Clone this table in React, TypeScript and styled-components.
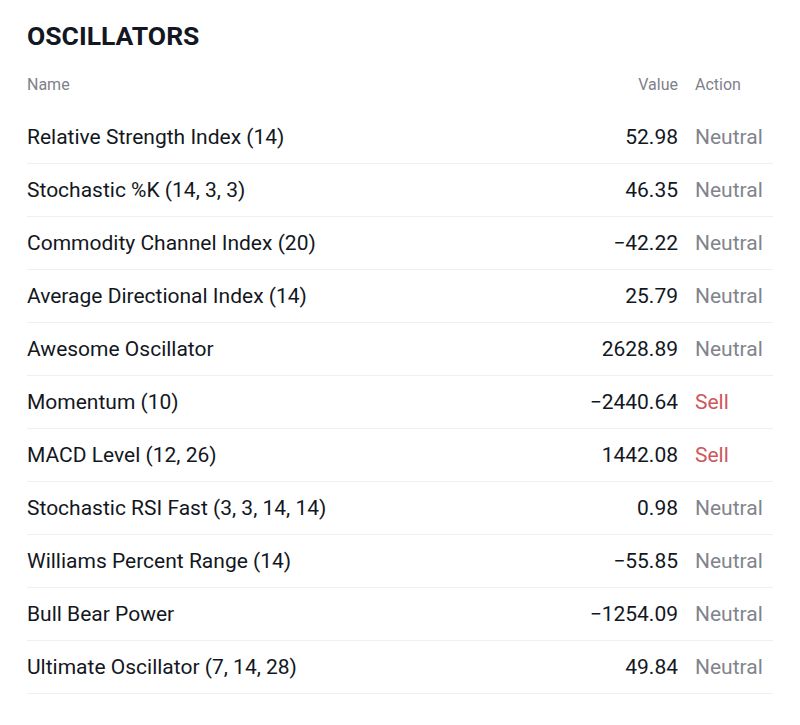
import React from "react";
import styled, { createGlobalStyle } from "styled-components";

const Global = createGlobalStyle`
  html, body { margin: 0; padding: 0; background: #ffffff; }
  body { font-family: Roboto, "Noto Sans", Arial, sans-serif; color: #131722; }
`;

const Page = styled.div`
  padding: 19px 27px 0 27px;
  width: 746px;
`;

const Title = styled.h2`
  margin: 0;
  font-size: 26.5px;
  font-weight: 700;
  line-height: 34px;
  color: #131722;
`;

const Table = styled.div`
  display: flex;
  flex-direction: column;
  margin-top: 22px;
`;

const HeadRow = styled.div`
  display: grid;
  grid-template-columns: 1fr auto 78px;
  column-gap: 17px;
  font-size: 16px;
  line-height: 20px;
  color: #7f818a;
  padding-bottom: 16px;
`;

const Row = styled.div`
  display: grid;
  grid-template-columns: 1fr auto 78px;
  column-gap: 17px;
  height: 52px;
  align-items: center;
  border-bottom: 1px solid #eeeff2;
  font-size: 21px;
  white-space: nowrap;
`;

const Name = styled.div`
  color: #131722;
`;

const Value = styled.div`
  color: #131722;
  text-align: right;
`;

const Action = styled.div<{ $sell?: boolean }>`
  color: ${(p) => (p.$sell ? "#cc585b" : "#82848c")};
`;

const HeadRight = styled.div`
  text-align: right;
`;

type Item = { name: string; value: string; action: "Neutral" | "Sell" };

const rows: Item[] = [
  { name: "Relative Strength Index (14)", value: "52.98", action: "Neutral" },
  { name: "Stochastic %K (14, 3, 3)", value: "46.35", action: "Neutral" },
  { name: "Commodity Channel Index (20)", value: "\u221242.22", action: "Neutral" },
  { name: "Average Directional Index (14)", value: "25.79", action: "Neutral" },
  { name: "Awesome Oscillator", value: "2628.89", action: "Neutral" },
  { name: "Momentum (10)", value: "\u22122440.64", action: "Sell" },
  { name: "MACD Level (12, 26)", value: "1442.08", action: "Sell" },
  { name: "Stochastic RSI Fast (3, 3, 14, 14)", value: "0.98", action: "Neutral" },
  { name: "Williams Percent Range (14)", value: "\u221255.85", action: "Neutral" },
  { name: "Bull Bear Power", value: "\u22121254.09", action: "Neutral" },
  { name: "Ultimate Oscillator (7, 14, 28)", value: "49.84", action: "Neutral" },
];

export default function App() {
  return (
    <>
      <Global />
      <Page>
        <Title>OSCILLATORS</Title>
        <Table>
          <HeadRow>
            <div>Name</div>
            <HeadRight>Value</HeadRight>
            <div>Action</div>
          </HeadRow>
          {rows.map((r) => (
            <Row key={r.name}>
              <Name>{r.name}</Name>
              <Value>{r.value}</Value>
              <Action $sell={r.action === "Sell"}>{r.action}</Action>
            </Row>
          ))}
        </Table>
      </Page>
    </>
  );
}
